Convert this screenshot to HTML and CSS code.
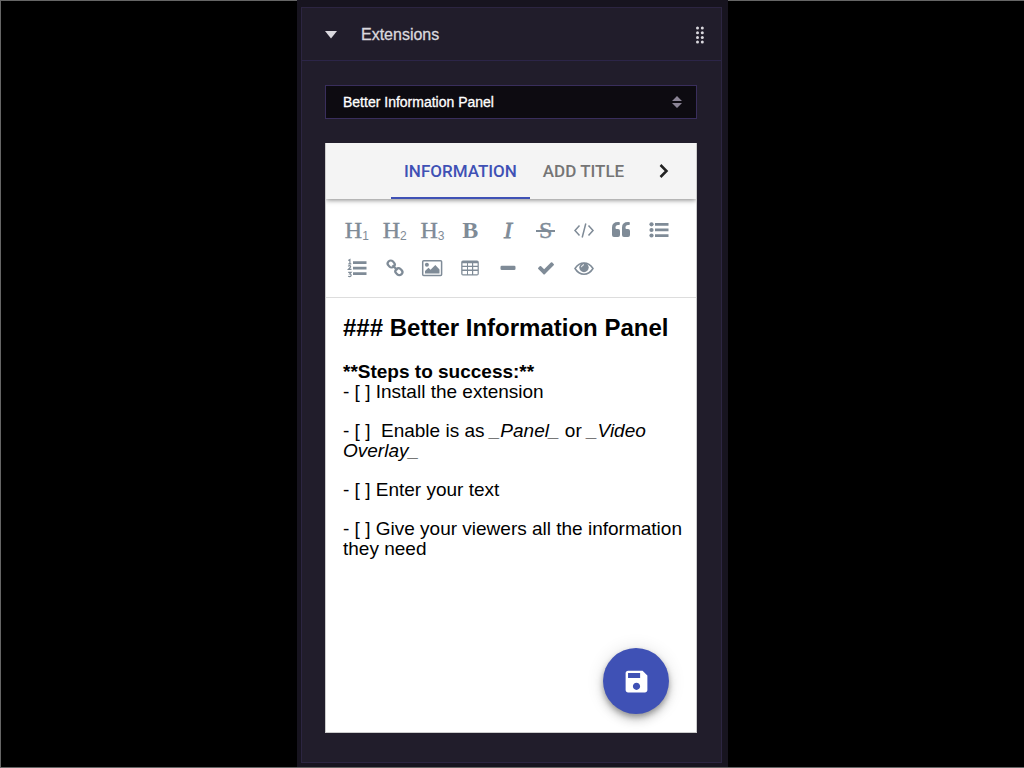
FILE: index.html
```html
<!DOCTYPE html>
<html lang="en">
<head>
<meta charset="utf-8">
<meta name="viewport" content="width=device-width, initial-scale=1">
<title>Extensions</title>
<link rel="stylesheet" href="styles.css">
</head>
<body>
<div class="stage">
<main class="dashboard">
<section class="panel">
  <header class="panel-header">
    <button class="collapse" type="button" aria-label="Collapse">
      <svg width="12" height="8" viewBox="0 0 12 8"><path d="M0 0H12L6 7.500Z"/></svg>
    </button>
    <h1 class="panel-title">Extensions</h1>
    <button class="grip" type="button" aria-label="Move panel">
      <svg width="8" height="18" viewBox="0 0 8 18"><g id="dots"><circle cx="1.500" cy="2" r="1.500"/><circle cx="6.300" cy="2" r="1.500"/><circle cx="1.500" cy="6.700" r="1.500"/><circle cx="6.300" cy="6.700" r="1.500"/><circle cx="1.500" cy="11.400" r="1.500"/><circle cx="6.300" cy="11.400" r="1.500"/><circle cx="1.500" cy="16" r="1.500"/><circle cx="6.300" cy="16" r="1.500"/></g></svg>
    </button>
  </header>
  <div class="panel-body">
    <div class="picker">
      <select class="picker-select" aria-label="Extension">
        <option>Better Information Panel</option>
      </select>
      <svg class="picker-arrows" width="10" height="12" viewBox="0 0 10 12"><path d="M0 5L5 0L10 5ZM0 7H10L5 12Z"/></svg>
    </div>
    <div class="card">
      <nav class="tabs">
        <div class="tab-list" role="tablist">
          <button class="tab tab-active" type="button" role="tab" aria-selected="true">INFORMATION</button>
          <button class="tab" type="button" role="tab" aria-selected="false">ADD TITLE</button>
        </div>
        <button class="next" type="button" aria-label="Next tabs">
          <svg width="10" height="16" viewBox="0 0 10 16"><path d="M1.500 2L7.500 8L1.500 14"/></svg>
        </button>
      </nav>
      <div class="toolbar" role="toolbar" aria-label="Formatting">
        <button class="tool" type="button" aria-label="Heading 1">H<span class="level">1</span></button>
        <button class="tool" type="button" aria-label="Heading 2">H<span class="level">2</span></button>
        <button class="tool" type="button" aria-label="Heading 3">H<span class="level">3</span></button>
        <button class="tool tool-bold" type="button" aria-label="Bold">B</button>
        <button class="tool tool-italic" type="button" aria-label="Italic">I</button>
        <button class="tool" type="button" aria-label="Strikethrough"><span class="struck">S</span></button>
        <button class="tool" type="button" aria-label="Code">
          <svg class="line" width="24" height="24" viewBox="0 0 24 24"><path d="M7.500 7.500L3 12.500L7.500 17.500M16.500 7.500L21 12.500L16.500 17.500M13.800 5.500L10.200 19.500"/></svg>
        </button>
        <button class="tool" type="button" aria-label="Quote">
          <svg width="24" height="24" viewBox="0 0 24 24"><path d="M11 13v4q0 2-2 2H5q-2 0-2-2V9.500Q3 4 9 4h1q.8 0 .8.800v1.400q0 .8-.8.800H9Q6.500 7 6.500 9.500v.5q0 1 1 1H9q2 0 2 2ZM21 13v4q0 2-2 2h-4q-2 0-2-2V9.500Q13 4 19 4h1q.8 0 .8.800v1.400q0 .8-.8.800h-1q-2.500 0-2.500 2.500v.5q0 1 1 1H19q2 0 2 2Z"/></svg>
        </button>
        <button class="tool" type="button" aria-label="Bulleted list">
          <svg width="24" height="24" viewBox="0 0 24 24"><path d="M8 5h13.500v2.700H8zM8 10.600h13.500v2.700H8zM8 16.200h13.500v2.700H8z"/><circle cx="4.500" cy="6.300" r="2.100"/><circle cx="4.500" cy="12" r="2.100"/><circle cx="4.500" cy="17.500" r="2.100"/></svg>
        </button>
        <button class="tool" type="button" aria-label="Numbered list">
          <svg width="24" height="24" viewBox="0 0 24 24"><path d="M8 5.300h13.500v2.700H8zM8 10.800h13.500v2.700H8zM8 16.300h13.500v2.700H8z"/><path class="numerals" d="M3.300 4.500L4.900 3.500V7.800M3.300 7.800H6.300M3.200 10.300Q3.800 9.500 4.800 9.600Q6.200 10 5.200 11.500L3.400 13.400H6.500M3.200 16.300H6.100L4.700 18Q6.300 18 6.100 19.700Q5.300 21.200 3.100 20.300"/></svg>
        </button>
        <button class="tool" type="button" aria-label="Link">
          <svg class="link" width="24" height="24" viewBox="0 0 24 24"><rect x="-3.600" y="-3" width="7.200" height="6" rx="2.800" transform="translate(8.200 8) rotate(45)"/><rect x="-3.600" y="-3" width="7.200" height="6" rx="2.800" transform="translate(15.900 15.700) rotate(45)"/><path d="M9.500 9.300L14.500 14.300"/></svg>
        </button>
        <button class="tool" type="button" aria-label="Image">
          <svg width="24" height="24" viewBox="0 0 24 24"><rect class="frame" x="2.700" y="4.700" width="18.900" height="14.800" rx="1"/><circle cx="6.900" cy="8.800" r="2"/><path d="M5 17.500V15L8.500 11.800L10.500 13.700L15.300 9L19.500 13.500V17.500Z"/></svg>
        </button>
        <button class="tool" type="button" aria-label="Table">
          <svg width="24" height="24" viewBox="0 0 24 24"><path fill-rule="evenodd" d="M5 4.500h14q1.800 0 1.800 1.800v11.400q0 1.800-1.800 1.800H5q-1.800 0-1.800-1.800V6.300Q3.200 4.500 5 4.500ZM4.500 7.200v2.500h4.500v-2.500ZM10 7.200v2.500h4v-2.500ZM15.200 7.200v2.500h4.400v-2.500ZM4.500 11v2.600h4.500v-2.600ZM10 11v2.600h4v-2.600ZM15.200 11v2.600h4.400v-2.600ZM4.500 14.900v3.300h4.500v-3.300ZM10 14.900v3.300h4v-3.300ZM15.200 14.900v3.300h4.400v-3.300Z"/></svg>
        </button>
        <button class="tool" type="button" aria-label="Horizontal rule">
          <svg width="24" height="24" viewBox="0 0 24 24"><rect x="4.500" y="9.800" width="15" height="4.200" rx="1.300"/></svg>
        </button>
        <button class="tool" type="button" aria-label="Task list">
          <svg width="24" height="24" viewBox="-270 -270 2332 2332"><path d="M1671 566q0 40-28 68l-724 724-136 136q-28 28-68 28t-68-28l-136-136-362-362q-28-28-28-68t28-68l136-136q28-28 68-28t68 28l294 295 656-657q28-28 68-28t68 28l136 136q28 28 28 68z"/></svg>
        </button>
        <button class="tool" type="button" aria-label="Preview">
          <svg width="24" height="24" viewBox="0 0 24 24"><path class="frame" d="M3 12.500Q6.500 7 12 7T21 12.500Q17.500 18.200 12 18.200T3 12.500Z"/><circle cx="12" cy="11.500" r="4.700"/><path class="glint" d="M9.500 11.200Q9.700 8.900 12 8.700"/></svg>
        </button>
      </div>
      <div class="editor" contenteditable="true" role="textbox" aria-multiline="true" aria-label="Panel text" spellcheck="false">
        <p class="heading">### Better Information Panel</p>
        <p class="text"><strong>**Steps to success:**</strong><br>- [ ] Install the extension</p>
        <p class="text">- [ ] &nbsp;Enable is as <em>_Panel_</em> or <em>_Video Overlay_</em></p>
        <p class="text">- [ ] Enter your text</p>
        <p class="text">- [ ] Give your viewers all the information they need</p>
      </div>
      <button class="save" type="button" aria-label="Save">
        <svg width="29" height="29" viewBox="0 0 24 24"><path d="M17 3H5c-1.110 0-2 .9-2 2v14c0 1.100.89 2 2 2h14c1.100 0 2-.9 2-2V7l-4-4zm-5 16c-1.660 0-3-1.340-3-3s1.340-3 3-3 3 1.340 3 3-1.340 3-3 3zm3-10H5V5h10v4z"/></svg>
      </button>
    </div>
  </div>
</section>
</main>
</div>
</body>
</html>
```
FILE: styles.css
```css
* { box-sizing: border-box; }

body {
  margin: 0;
  background: #000;
  font-family: "Liberation Sans", Arial, sans-serif;
}

button {
  margin: 0;
  padding: 0;
  border: 0;
  background: none;
  color: inherit;
  cursor: pointer;
}

svg { display: block; fill: currentColor; }

.stage {
  display: flex;
  justify-content: center;
  min-height: 100vh;
  padding: 0 0 1px 1px;
  background: linear-gradient(#666, #666) top / 100% 1px no-repeat,
              linear-gradient(#666, #666) bottom / 100% 1px no-repeat,
              linear-gradient(#666, #666) left / 1px 100% no-repeat,
              #000;
}

.dashboard {
  display: flex;
  width: 100%;
  max-width: 431px;
  padding: 7px 6px 4px 4px;
  background: #17141f;
}

.panel {
  display: flex;
  flex: 1;
  flex-direction: column;
  min-width: 0;
  border: 1px solid #2c2541;
  background: #211d2b;
}

.panel-header {
  display: flex;
  align-items: center;
  height: 53px;
  padding: 2px 17px 0 23px;
  border-bottom: 1px solid #2c2548;
  color: #dad8de;
}

.panel-title {
  flex: 1;
  margin: 0 0 0 24px;
  font-size: 16px;
  font-weight: 400;
  line-height: 20px;
  -webkit-text-stroke: 0.3px;
}

.panel-body {
  display: flex;
  flex: 1;
  flex-direction: column;
  gap: 24px;
  padding: 24px 24px 29px 23px;
}

.picker { position: relative; }

.picker-select {
  display: block;
  width: 100%;
  height: 34px;
  padding: 0 36px 0 17px;
  appearance: none;
  border: 1px solid #392e5c;
  border-radius: 0;
  background: #0d0b11;
  color: #fff;
  font: 14px "Liberation Sans", Arial, sans-serif;
  -webkit-text-stroke: 0.3px;
}

.picker-arrows {
  position: absolute;
  top: 11px;
  right: 15px;
  color: #8b8496;
  pointer-events: none;
}

.card {
  position: relative;
  display: flex;
  flex: 1;
  flex-direction: column;
  border: 1px solid #ccc;
  border-top: 0;
  background: #fff;
}

.tabs {
  position: relative;
  display: flex;
  height: 56px;
  padding-left: 65px;
  background: #f4f4f4;
  box-shadow: 0 1px 5px rgba(0, 0, 0, 0.5);
  clip-path: inset(0 0 -10px 0);
}

.tab-list { display: flex; flex: 1; }

.tab {
  padding: 2px 13px 0;
  border-bottom: 2px solid transparent;
  color: #757575;
  font: 500 17px Roboto, sans-serif;
  white-space: nowrap;
}

.tab-active { border-color: #3f51b5; color: #3f51b5; }

.next {
  display: flex;
  flex: none;
  align-items: center;
  justify-content: flex-end;
  padding-right: 27px;
  color: #222;
}

.next svg { fill: none; stroke: currentColor; stroke-width: 2.5; }

.toolbar {
  display: grid;
  grid-template-columns: repeat(9, 1fr);
  grid-auto-rows: 38px;
  padding: 12px 18px 10px 12px;
  border-bottom: 1px solid #ddd;
  color: #7f8b97;
}

.tool {
  display: flex;
  align-items: center;
  justify-content: center;
  font: 24px "Liberation Serif", "Times New Roman", serif;
  -webkit-text-stroke: 0.4px;
}

.level {
  padding-top: 11px;
  font: 12px "Liberation Sans", Arial, sans-serif;
  -webkit-text-stroke: 0;
}

.tool-bold { font-weight: 700; -webkit-text-stroke: 0; }
.tool-italic { font-style: italic; -webkit-text-stroke: 0.8px; }

.struck {
  padding: 0 3px;
  background: linear-gradient(currentColor, currentColor) 0 13px / 100% 2px no-repeat;
}

.line { fill: none; stroke: currentColor; stroke-width: 1.5; }
.link { fill: none; stroke: currentColor; stroke-width: 2.2; }
.frame { fill: none; stroke: currentColor; stroke-width: 1.5; }
.numerals { fill: none; stroke: currentColor; stroke-width: 1.2; }
.glint { fill: none; stroke: #fff; stroke-width: 1; }

.editor {
  flex: 1;
  padding: 15px 12px 80px 17px;
  outline: 0;
  color: #000;
}

.editor p { margin: 0; }

.editor .heading {
  margin-bottom: 19px;
  font-size: 24px;
  font-weight: 700;
  line-height: 30px;
}

.editor .text {
  font-size: 19px;
  line-height: 20px;
}

.editor .text + .text { margin-top: 19px; }

.save {
  position: absolute;
  right: 27px;
  bottom: 18px;
  display: flex;
  align-items: center;
  justify-content: center;
  width: 66px;
  height: 66px;
  border-radius: 50%;
  background: #3f51b5;
  color: #fff;
  box-shadow: 0 3px 5px rgba(0, 0, 0, 0.25), 0 6px 10px rgba(0, 0, 0, 0.16), 0 1px 18px rgba(0, 0, 0, 0.12);
}
```
